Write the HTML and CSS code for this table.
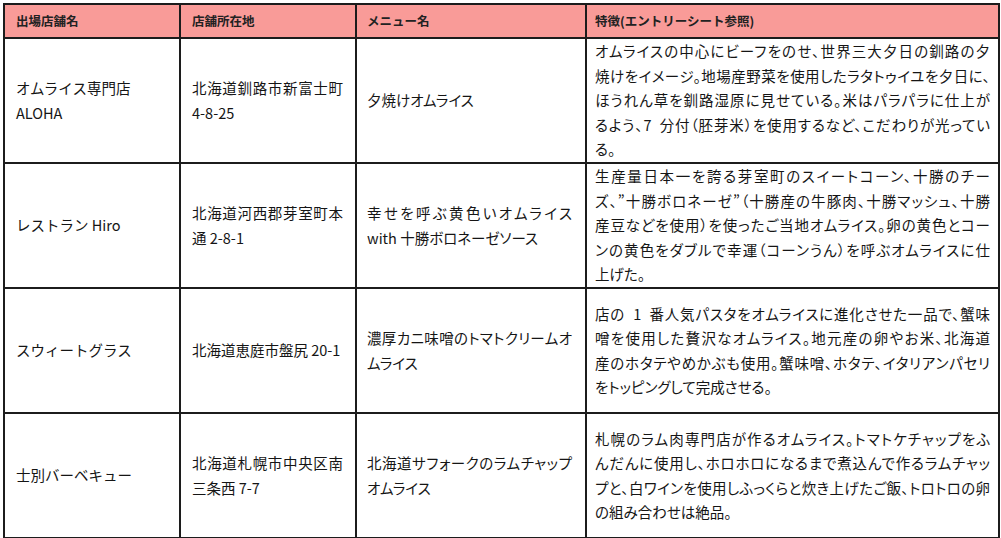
FILE: index.html
```html
<!DOCTYPE html>
<html lang="ja">
<head>
<meta charset="utf-8">
<title>オムライス出場店舗</title>
<link rel="stylesheet" href="styles.css">
</head>
<body>
<table class="sheet">
  <colgroup>
    <col class="c-name">
    <col class="c-addr">
    <col class="c-menu">
    <col class="c-feat">
  </colgroup>
  <thead>
    <tr class="head">
      <th class="name">出場店舗名</th>
      <th class="addr">店舗所在地</th>
      <th class="menu">メニュー名</th>
      <th class="feat">特徴(エントリーシート参照)</th>
    </tr>
  </thead>
  <tbody>
    <tr class="row">
      <td class="name"><span class="ln">オムライス専門店</span><span class="ln">ALOHA</span></td>
      <td class="addr"><span class="ln j">北海道釧路市新富士町</span><span class="ln">4-8-25</span></td>
      <td class="menu"><span class="ln">夕焼けオムライス</span></td>
      <td class="feat">
        <span class="ln j">オムライスの中心にビーフをのせ、世界三大夕日の釧路の夕</span>
        <span class="ln j">焼けをイメージ。地場産野菜を使用したラタトゥイユを夕日に、</span>
        <span class="ln j">ほうれん草を釧路湿原に見せている。米はパラパラに仕上が</span>
        <span class="ln j">るよう、7&nbsp;&nbsp;分付（胚芽米）を使用するなど、こだわりが光ってい</span>
        <span class="ln">る。</span>
      </td>
    </tr>
    <tr class="row">
      <td class="name"><span class="ln">レストラン Hiro</span></td>
      <td class="addr"><span class="ln j">北海道河西郡芽室町本</span><span class="ln">通 2-8-1</span></td>
      <td class="menu"><span class="ln j">幸せを呼ぶ黄色いオムライス</span><span class="ln">with 十勝ボロネーゼソース</span></td>
      <td class="feat">
        <span class="ln j">生産量日本一を誇る芽室町のスイートコーン、十勝のチー</span>
        <span class="ln j">ズ、”十勝ボロネーゼ”（十勝産の牛豚肉、十勝マッシュ、十勝</span>
        <span class="ln j">産豆などを使用）を使ったご当地オムライス。卵の黄色とコー</span>
        <span class="ln j">ンの黄色をダブルで幸運（コーンうん）を呼ぶオムライスに仕</span>
        <span class="ln">上げた。</span>
      </td>
    </tr>
    <tr class="row">
      <td class="name"><span class="ln">スウィートグラス</span></td>
      <td class="addr"><span class="ln">北海道恵庭市盤尻 20-1</span></td>
      <td class="menu"><span class="ln j">濃厚カニ味噌のトマトクリームオ</span><span class="ln">ムライス</span></td>
      <td class="feat">
        <span class="ln j">店の&nbsp;&nbsp;1&nbsp;&nbsp;番人気パスタをオムライスに進化させた一品で、蟹味</span>
        <span class="ln j">噌を使用した贅沢なオムライス。地元産の卵やお米、北海道</span>
        <span class="ln j">産のホタテやめかぶも使用。蟹味噌、ホタテ、イタリアンパセリ</span>
        <span class="ln">をトッピングして完成させる。</span>
      </td>
    </tr>
    <tr class="row">
      <td class="name"><span class="ln">士別バーベキュー</span></td>
      <td class="addr"><span class="ln j">北海道札幌市中央区南</span><span class="ln">三条西 7-7</span></td>
      <td class="menu"><span class="ln j">北海道サフォークのラムチャップ</span><span class="ln">オムライス</span></td>
      <td class="feat">
        <span class="ln j">札幌のラム肉専門店が作るオムライス。トマトケチャップをふ</span>
        <span class="ln j">んだんに使用し、ホロホロになるまで煮込んで作るラムチャッ</span>
        <span class="ln j">プと、白ワインを使用しふっくらと炊き上げたご飯、トロトロの卵</span>
        <span class="ln">の組み合わせは絶品。</span>
      </td>
    </tr>
  </tbody>
</table>
</body>
</html>
```
FILE: styles.css
```css
html, body {
  margin: 0;
  padding: 0;
  background: #ffffff;
}

body {
  padding: 3px 0 0 3px;
  font-family: "Noto Sans CJK JP", "Noto Sans", sans-serif;
  color: #151515;
}

.sheet {
  border-collapse: collapse;
  table-layout: fixed;
  width: 995px;
}

.c-name { width: 176px; }
.c-addr { width: 176px; }
.c-menu { width: 230px; }
.c-feat { width: 413px; }

.sheet th,
.sheet td {
  border: 2px solid #1c1c1c;
  vertical-align: middle;
  text-align: left;
  padding: 0 10px 0 11px;
}

.head {
  height: 34px;
  background: #f99b98;
}

.head th {
  font-size: 12.5px;
  font-weight: 700;
  line-height: 16px;
  color: #222;
}

.row {
  height: 125px;
}

.row td {
  font-size: 14.5px;
  line-height: 24.4px;
  font-weight: 400;
  font-feature-settings: "palt";
}

.row td.name {
  font-feature-settings: normal;
}

.sheet .addr {
  padding: 0 12px 0 11px;
}

.sheet .menu {
  padding: 0 13px 0 10px;
}

.sheet .feat {
  padding: 0 8px 0 8px;
}

.ln {
  display: block;
}

.ln.j {
  text-align: justify;
  text-align-last: justify;
}
```
